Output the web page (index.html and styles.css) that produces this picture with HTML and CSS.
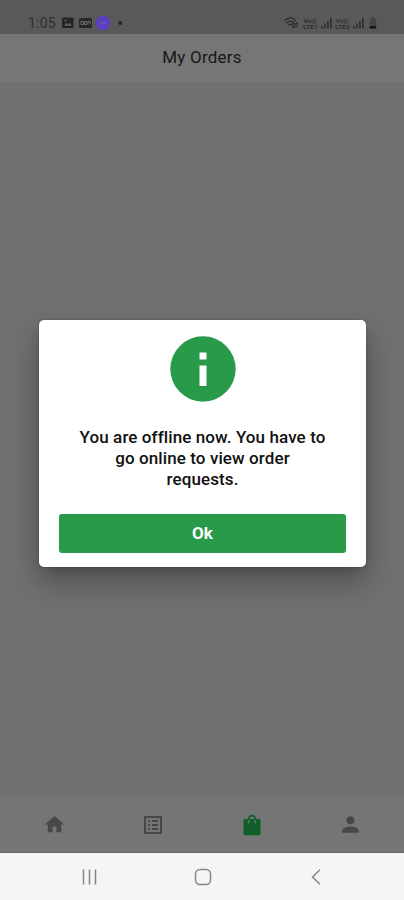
FILE: index.html
```html
<!DOCTYPE html>
<html lang="en">
<head>
<meta charset="utf-8">
<title>My Orders</title>
<link rel="stylesheet" href="styles.css">
</head>
<body>
<div class="phone">
  <div class="status">
    <span class="clock">1:05</span>
    <svg class="notes" width="66" height="16" viewBox="0 0 66 16">
      <rect x="0" y="2.5" width="11.5" height="10.5" rx="1.5" fill="#232323"/>
      <path d="M2 10.7l2.3-3 1.7 2 1.6-2 2.2 3zM2.4 4.7h2.3v1.5H2.4z" fill="#626262"/>
      <rect x="17" y="3" width="13" height="10" rx="1.5" fill="#262626"/>
      <path d="M18.8 6.5h2.6v3h-2.6zM22.5 6.5h2.2v3h-2.2zM26 9.5v-3h2.3v3" fill="none" stroke="#6a6a6a"/>
      <circle cx="41" cy="8" r="7.3" fill="#5b3fbd"/>
      <path d="M38 9.3l2.3-2.2 1.8 1.6 2.8-2.2" fill="none" stroke="#7355c9" stroke-width="1.2"/>
      <circle cx="58.3" cy="8" r="1.9" fill="#222"/>
    </svg>
    <svg class="signals" width="95" height="16" viewBox="0 0 95 16">
      <g fill="none" stroke="#2f2f2f" stroke-width="1.3">
        <path d="M.5 5.7Q6.300 0 12 5.700M2.500 8Q6.300 4.200 10.200 8M4.400 10.300Q6.300 8.400 8.200 10.300"/>
        <path d="M7.500 9h6M12 7.500L13.800 9M14 11.500H8.500M10 13L8.300 11.500"/>
      </g>
      <g fill="#303030" font-family="Roboto, sans-serif" font-size="6" font-weight="700">
        <text x="19.500" y="7.500" textLength="13" lengthAdjust="spacingAndGlyphs">Vo))</text><text x="19" y="13.500" textLength="15" lengthAdjust="spacingAndGlyphs">LTE1</text>
        <text x="52" y="7.500" textLength="12" lengthAdjust="spacingAndGlyphs">Vo))</text><text x="51" y="13.500" textLength="15" lengthAdjust="spacingAndGlyphs">LTE2</text>
      </g>
      <path d="M37 11h1.800v2.500H37zM40 8.500h1.800v5H40zM43 6h1.800v7.500H43zM46 3h1.800v10.500H46zM69 11h1.800v2.500H69zM72 8.500h1.800v5H72zM75 6h1.800v7.500H75zM78 3h1.800v10.500H78z" fill="#303030"/>
      <path d="M87.300 2.300h3.400v1.400h1.500V13.500h-6.500V3.700h1.600z" fill="#454545"/>
      <path d="M85.700 11h6.500v2.500h-6.500z" fill="#161616"/>
    </svg>
  </div>
  <header class="appbar">My Orders</header>
  <main class="content">
    <section class="dialog">
      <svg class="info" width="66" height="66" viewBox="0 0 66 66">
        <circle cx="33" cy="33" r="32.700" fill="#289a49"/>
        <path d="M29.500 16.500h7v7h-7zM29.500 29.500h7V50h-7z" fill="#fff"/>
      </svg>
      <p class="message">You are offline now. You have to<br>go online to view order<br>requests.</p>
      <button class="ok">Ok</button>
    </section>
  </main>
  <nav class="tabs">
    <span class="tab"><svg width="23" height="23" viewBox="0 0 24 24"><path d="M10 20v-6h4v6h5v-8h3L12 3 2 12h3v8z"/></svg></span>
    <span class="tab"><svg width="24" height="24" viewBox="0 0 24 24"><path d="M19 5v14H5V5h14m1.100-2H3.900c-.5 0-.9.400-.9.900v16.200c0 .4.400.9.900.9h16.200c.4 0 .9-.5.900-.9V3.900c0-.5-.5-.9-.9-.9zM11 7h6v2h-6V7zm0 4h6v2h-6v-2zm0 4h6v2h-6v-2zM7 7h2v2H7V7zm0 4h2v2H7v-2zm0 4h2v2H7v-2z"/></svg></span>
    <span class="tab active"><svg width="22" height="24" viewBox="0 0 22 24"><path fill-rule="evenodd" d="M4 6h2.700C7 3.400 8.800 1.800 11 1.800S15 3.400 15.300 6H18c1 0 1.500.7 1.500 1.500v13c0 1-.7 1.700-1.700 1.700H4.200c-1 0-1.700-.7-1.700-1.700v-13C2.500 6.700 3 6 4 6zM8.700 6h4.600C13 4.400 12.200 3.600 11 3.600S9 4.400 8.700 6zM6.800 7.500c0 1.500.3 2.500 1 3.300.7-.8 1-1.800.8-3.300zM13.400 7.500c-.2 1.500.1 2.500.8 3.300.7-.8 1-1.800 1-3.300z"/></svg></span>
    <span class="tab"><svg width="25" height="25" viewBox="0 0 24 24"><path d="M12 12c2.210 0 4-1.790 4-4s-1.790-4-4-4-4 1.790-4 4 1.790 4 4 4zm0 2c-2.670 0-8 1.340-8 4v2h16v-2c0-2.660-5.330-4-8-4z"/></svg></span>
  </nav>
  <footer class="system">
    <svg width="16" height="16" viewBox="0 0 16 16"><path d="M1.500.5v15M7.500.5v15M13.500.5v15"/></svg>
    <svg width="18" height="18" viewBox="0 0 18 18"><rect x="1.500" y="1.500" width="15" height="15" rx="4.500"/></svg>
    <svg width="16" height="16" viewBox="0 0 16 16"><path d="M12 .8L4.500 8 12 15.200"/></svg>
  </footer>
</div>
</body>
</html>
```
FILE: styles.css
```css
* { box-sizing: border-box; }
body { margin: 0; font-family: Roboto, sans-serif; }
.phone {
  width: 404px;
  height: 900px;
  display: flex;
  flex-direction: column;
  overflow: hidden;
  background: #717171;
}
.status {
  height: 34px;
  flex: none;
  display: flex;
  align-items: flex-start;
  padding: 15px 25px 0 28px;
  background: #595959;
}
.clock { width: 34px; font-size: 14px; line-height: 16px; color: #303030; letter-spacing: .2px; }
.signals { margin-left: auto; }
.appbar {
  height: 48px;
  flex: none;
  background: #767676;
  color: #181818;
  font-size: 17px;
  line-height: 47px;
  text-align: center;
  letter-spacing: .2px;
}
.content { flex: 1; padding: 238px 38px 0 39px; }
.dialog {
  height: 247px;
  display: flex;
  flex-direction: column;
  align-items: center;
  padding: 16px 20px 0 20px;
  background: #fff;
  border-radius: 5px;
  box-shadow: 0 15px 30px 3px rgba(0, 0, 0, .25), 0 7px 12px -6px rgba(0, 0, 0, .25), 0 0 2px rgba(0, 0, 0, .3);
}
.info { flex: none; }
.message {
  margin: 25px 0 24px;
  color: #111;
  font-size: 17px;
  font-weight: 500;
  line-height: 21px;
  letter-spacing: .1px;
  text-align: center;
  white-space: nowrap;
}
.ok {
  width: 100%;
  height: 39px;
  flex: none;
  padding: 0;
  border: 0;
  border-radius: 3px;
  background: #289a49;
  color: #fff;
  font: 700 17px/39px Roboto, sans-serif;
}
.tabs {
  height: 56px;
  flex: none;
  display: flex;
  padding: 0 4px 0 5px;
  background: #757575;
  border-bottom: 1px solid #666;
}
.tab { flex: 1; display: flex; align-items: center; justify-content: center; fill: #474747; }
.active { fill: #105e2a; }
.system {
  height: 47px;
  flex: none;
  display: flex;
  align-items: center;
  justify-content: space-between;
  padding: 0 80px 0 82px;
  background: #f5f5f5;
  fill: none;
  stroke: #858585;
  stroke-width: 1.5;
}
```
